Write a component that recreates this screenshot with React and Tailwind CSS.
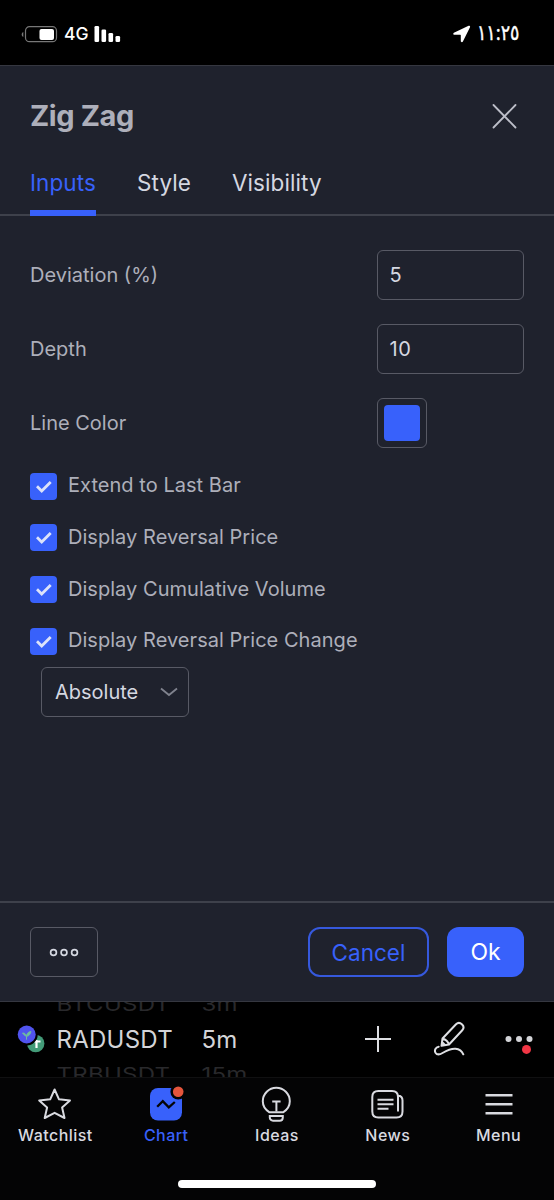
import React from "react";

const tabs = ["Inputs", "Style", "Visibility"];

function StatusBar() {
  return (
    <header className="flex h-[65px] shrink-0 items-start justify-between bg-black pr-[34px] pl-[21px] pt-[24px] text-white">
      <div className="flex h-5 items-center">
        <svg width="37" height="18" viewBox="0 0 37 18" fill="none">
          <path d="M2.300 7v5C1.200 11.500.700 10.600.700 9.500S1.200 7.400 2.300 7z" fill="#777" />
          <rect x="4.500" y="1.700" width="31" height="15" rx="4" stroke="#777" strokeWidth="1.200" />
          <rect x="18.500" y="4" width="14.500" height="11" rx="2" fill="#fff" />
        </svg>
        <span className="ml-[6px] w-[24px] text-[17.500px] font-medium whitespace-nowrap">4G</span>
        <svg className="ml-[6px]" width="27" height="18" viewBox="0 0 27 18" fill="#fff">
          <rect x="0.500" y="1" width="4.600" height="16" rx="1.300" />
          <rect x="7.500" y="4.500" width="4.600" height="12.500" rx="1.300" />
          <rect x="14.500" y="8" width="4.600" height="9" rx="1.300" />
          <rect x="21.500" y="11" width="4.600" height="6" rx="1.300" />
        </svg>
      </div>
      <div className="flex h-5 items-center">
        <svg width="18" height="18" viewBox="0 0 18 18" fill="#fff">
          <path d="M15.600.8.900 7.700c-1 .5-.8 2 .4 2h6c.3 0 .5.2.5.500v5.900c0 1.300 1.600 1.500 2.100.500L17 2.200C17.400 1.200 16.500.4 15.600.8z" />
        </svg>
        <span className="mb-[2px] ml-[6px] flex w-[43px] origin-left scale-x-[.83] text-[21px] leading-5 font-normal whitespace-nowrap [-webkit-text-stroke:0.400px_white]">١١:٢٥</span>
      </div>
    </header>
  );
}

function NumberRow({ label, value }) {
  return (
    <div className="flex h-[50px] items-center justify-between">
      <span>{label}</span>
      <div className="flex h-[50px] w-[147.500px] items-center rounded-[6px] border border-[#585a65] pl-[12px] tracking-[0.500px] text-[#d5d8e1]">{value}</div>
    </div>
  );
}

function Check({ label }) {
  return (
    <div className="flex h-[27px] items-center">
      <span className="flex size-[27px] items-center justify-center rounded-[4px] bg-[#3861fb]">
        <svg width="27" height="27" viewBox="0 0 27 27" fill="none" stroke="#dce2fa" strokeWidth="2.800">
          <path d="m7 13.300 4.700 4.700 9-9" />
        </svg>
      </span>
      <span className="relative -top-px ml-[11px] tracking-[0.040px] whitespace-nowrap">{label}</span>
    </div>
  );
}

function NavItem({ label, active, children }) {
  return (
    <div className={active ? "flex w-[111px] flex-col items-center text-[#3861fb]" : "flex w-[111px] flex-col items-center text-[#d9dae0]"}>
      <svg width="40" height="40" viewBox="0 0 40 40" fill="none" stroke="currentColor" strokeWidth="2">
        {children}
      </svg>
      <span className="mt-px text-[16px] leading-5 font-medium tracking-[0.450px]">{label}</span>
    </div>
  );
}

function Wheel({ items, className }) {
  return (
    <div className={className}>
      <span className="block origin-left scale-y-[.8] text-[#29292c]">{items[0]}</span>
      <span className="block">{items[1]}</span>
      <span className="block origin-left scale-y-[.8] text-[#29292c]">{items[2]}</span>
    </div>
  );
}

export default function App() {
  return (
    <div className="flex h-[1200px] w-[554px] flex-col overflow-hidden bg-black font-['Inter','Noto_Sans','DejaVu_Sans',sans-serif]">
      <StatusBar />
      <main className="flex h-[937px] shrink-0 flex-col border-y-[1.500px] border-[#353740] bg-[#1f222d] text-[#adafba]">
        <div className="flex h-[100px] shrink-0 items-center justify-between pr-[36px] pl-[30px]">
          <h1 className="text-[29px] font-bold tracking-[-0.400px]">Zig Zag</h1>
          <svg width="27" height="27" viewBox="0 0 27 27" stroke="#bcbec8" strokeWidth="1.800" strokeLinecap="round">
            <path d="m2.500 2 22 22.500M24.500 2l-22 22.500" />
          </svg>
        </div>
        <nav className="flex h-[50px] shrink-0 border-b-2 border-[#3e414b] pl-[30px] text-[22.500px] text-[#d5d8e1]">
          {tabs.map((tab, i) => (
            <div key={tab} className={i === 0 ? "mr-[41px] h-[50px] w-[66px] shrink-0 border-b-[6px] border-[#3861fb] text-[#3861fb]" : "mr-[41px] h-[50px]"}>
              <span className="block leading-[34px] tracking-[0.080px] whitespace-nowrap">{tab}</span>
            </div>
          ))}
        </nav>
        <section className="flex grow flex-col px-[30px] pt-[34px] text-[20px]">
          <div className="flex flex-col gap-6">
            <NumberRow label="Deviation (%)" value="5" />
            <NumberRow label="Depth" value="10" />
            <div className="flex h-[50px] items-center justify-between">
              <span>Line Color</span>
              <div className="mr-[97.500px] flex size-[50px] items-center justify-center rounded-[6px] border border-[#585a65]">
                <span className="size-[36px] rounded-[4px] bg-[#3861fb]" />
              </div>
            </div>
          </div>
          <div className="mt-[24.700px] flex flex-col gap-[24.700px]">
            <Check label="Extend to Last Bar" />
            <Check label="Display Reversal Price" />
            <Check label="Display Cumulative Volume" />
            <Check label="Display Reversal Price Change" />
          </div>
          <div className="mt-[12px] ml-[11px] flex h-[50px] w-[148px] items-center justify-between rounded-[6px] border border-[#585a65] pr-[10px] pl-[13px] text-[#d5d8e1]">
            <span>Absolute</span>
            <svg width="18" height="10" viewBox="0 0 18 10" fill="none" stroke="#80838e" strokeWidth="1.800">
              <path d="m1 1.500 8 6.500 8-6.500" />
            </svg>
          </div>
        </section>
        <footer className="flex h-[100px] shrink-0 items-center border-t-2 border-[#3e414b] px-[30px] text-[22px]">
          <button className="flex h-[50px] w-[68px] items-center justify-center rounded-[6px] border border-[#585a65]">
            <svg width="30" height="9" viewBox="0 0 30 9" fill="none" stroke="#d5d8e1" strokeWidth="1.700">
              <circle cx="4.500" cy="4.500" r="2.900" />
              <circle cx="15" cy="4.500" r="2.900" />
              <circle cx="25.500" cy="4.500" r="2.900" />
            </svg>
          </button>
          <button className="ml-auto h-[50px] w-[121px] rounded-[12px] border-2 border-[#3659dd] pt-px text-[22.500px] text-[#3861fb]">Cancel</button>
          <button className="ml-[18px] h-[50px] w-[77px] rounded-[12px] bg-[#3861fb] pt-px text-[23px] text-white">Ok</button>
        </footer>
      </main>
      <section className="flex h-[75px] shrink-0 items-center justify-between overflow-hidden pr-[19.500px] pl-[17px] text-[#d3d4d8]">
        <div className="flex items-center text-[24px] leading-[35px] tracking-[0.250px]">
          <svg width="30" height="30" viewBox="0 0 30 30">
            <circle cx="18.700" cy="18.500" r="8.700" fill="#439b78" />
            <path d="M17 16.500h6.500M19.500 15v8" stroke="#fff" strokeWidth="2.200" />
            <circle cx="9.700" cy="9.500" r="11" fill="#000" />
            <circle cx="9.700" cy="9.500" r="9" fill="#5054ee" />
            <path d="M9.500 14.500V11.500C8.500 11 6.500 10 5.500 8c2-.3 3.500 1 4 3.500 0-3 2-5 4.500-5-.3 2.500-2 4.500-4.500 5z" fill="#70bda0" stroke="#70bda0" strokeWidth=".8" />
          </svg>
          <Wheel className="ml-[9.500px] w-[145px]" items={["BTCUSDT", "RADUSDT", "TRBUSDT"]} />
          <Wheel className="w-[60px]" items={["3m", "5m", "15m"]} />
        </div>
        <div className="mb-[2px] flex items-center">
          <svg width="28" height="28" viewBox="0 0 28 28" stroke="#dedfe3" strokeWidth="2"><path d="M1 14h26M14 1v26" /></svg>
          <svg className="ml-[41px]" width="34" height="36" viewBox="0 0 34 36" fill="none" stroke="#dedfe3" strokeWidth="2" strokeLinecap="round" strokeLinejoin="round">
            <path d="M9.500 17.500 23 3.200c3.800-3.500 9.700 1.500 6.500 5.800L16 23.500l-7.500 1.300zM9.500 17.500c2.500.8 5.500 3 6.500 6M9 21l3 3M5.700 25.700c-3 .5-4.700 3.500-3.200 6 1.500 2.300 4.500 1.800 7 .3 7-4 10-4.500 13-4.200 3.500.3 6.500 2.500 7.800 5.500" />
          </svg>
          <svg className="ml-[37.500px]" width="30" height="30" viewBox="0 0 30 30" fill="#d3d4d8">
            <circle cx="3.500" cy="15" r="3" /><circle cx="14" cy="15" r="3" /><circle cx="24.500" cy="15" r="3" /><circle cx="21.500" cy="25.400" r="4.500" fill="#f23645" />
          </svg>
        </div>
      </section>
      <footer className="flex h-[123px] shrink-0 flex-col border-t border-[#101011] bg-[#040405]">
        <nav className="flex pt-[6px]">
          <NavItem label="Watchlist"><path d="m19.600 5.500 4.400 9.800 11 1.200-7.900 7 2.400 10.500-9.900-5.200L9.700 34l2.400-10.500-7.900-7 11-1.200z" strokeLinejoin="round" /></NavItem>
          <NavItem label="Chart" active>
            <rect x="4" y="4" width="32" height="32.500" rx="8" fill="#3861fb" stroke="none" />
            <path d="m11.200 22.800 5.600-5.600 6 6.200 6-5.400" stroke="#050507" strokeWidth="2.300" />
            <circle cx="32.200" cy="7.700" r="7.800" fill="#040405" stroke="none" />
            <circle cx="32.200" cy="7.700" r="5.300" fill="#e5553c" stroke="none" />
          </NavItem>
          <NavItem label="Ideas">
            <path d="M12.500 28.300C8.300 25.800 5.800 21.800 5.800 17.300a13.500 13.500 0 0 1 27 0c0 4.500-2.500 8.500-6.700 11zM12.800 32h13v1.500c0 2-1.500 3.200-3.200 3.200h-6.600c-1.700 0-3.200-1.200-3.200-3.200z" />
            <path d="M15.200 17.500h8.400M19.400 17.500v10" />
          </NavItem>
          <NavItem label="News">
            <path d="M30 27.500V13c0-4-2-6-6-6H10.300c-4 0-6 2-6 6v14.500c0 4 2 6 6 6H28.500c4 0 6-2 6-6V16.500c0-3-1.500-4.800-4.500-4.800M9.500 15.700h16M9.500 20.300h16M9.500 24.700H20.500" />
          </NavItem>
          <NavItem label="Menu"><path d="M6.500 11.300H33.500M6.500 20.300H33.500M6.500 29.300H33.500" strokeWidth="2.600" /></NavItem>
        </nav>
        <div className="mt-auto mb-[12px] ml-[178px] h-[8px] w-[198px] rounded-full bg-white" />
      </footer>
    </div>
  );
}
